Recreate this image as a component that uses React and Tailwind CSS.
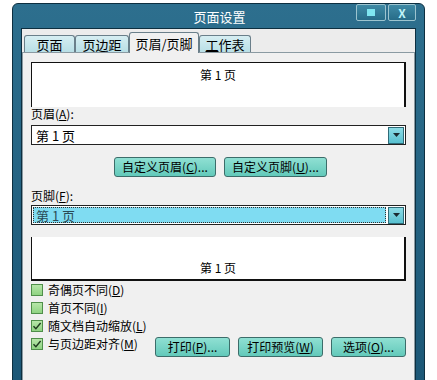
import React from "react";

const font = { fontFamily: '"Noto Sans CJK SC", "Liberation Sans", sans-serif' };

const Tab = ({ label, w, active }) => (
  <div
    className={
      active
        ? `relative z-10 -mb-px h-[21px] ${w} bg-[#f0f0f0] border border-b-0 border-[#6a7f8a] rounded-t-[3px] flex items-center justify-center text-[13px] leading-none text-black`
        : `h-[17px] ${w} bg-gradient-to-b from-[#d6eef2] to-[#b9dfe6] border border-b-0 border-[#6a7f8a] rounded-t-[3px] flex items-center justify-center text-[13px] leading-none text-black`
    }
  >
    {label}
  </div>
);

const Btn = ({ children, w }) => (
  <button
    className={`h-[20px] ${w} rounded-[3px] border border-[#3c6d6a] bg-gradient-to-b from-[#8fe0d3] to-[#62c9ba] text-[12px] text-black flex items-center justify-center leading-none`}
  >
    {children}
  </button>
);

const Arrow = () => (
  <div className="w-[16px] h-[17px] mr-px bg-gradient-to-b from-[#8cdce6] to-[#57c0d0] border border-[#2f6a77] flex items-center justify-center">
    <svg width="7" height="4" viewBox="0 0 7 4">
      <path d="M0 0h7L3.5 4z" fill="#1a2a30" />
    </svg>
  </div>
);

const Check = ({ checked, label }) => (
  <div className="flex items-center h-[18px] gap-[5px]">
    <div className="w-[12px] h-[12px] border border-[#4f8f4a] bg-gradient-to-b from-[#b6e6a8] to-[#8fd382] flex items-center justify-center">
      {checked && (
        <svg width="10" height="10" viewBox="0 0 10 10">
          <path d="M1.5 5.2l2.4 2.5L8.6 2" stroke="#1f3a1f" strokeWidth="1.4" fill="none" />
        </svg>
      )}
    </div>
    <span className="text-[12px] leading-none text-black">{label}</span>
  </div>
);

export default function App() {
  return (
    <div className="w-[437px] h-[380px] bg-white overflow-hidden pt-[3px]" style={font}>
      <div className="ml-[12px] w-[413px] h-[400px] rounded-t-[6px] bg-gradient-to-b from-[#2d6f8e] to-[#1b5675] border border-[#0d2f40] flex flex-col">
        <div className="h-[24px] flex items-center relative">
          <div className="flex-1 text-center text-white text-[13px] leading-none pl-[2px]">页面设置</div>
          <div className="absolute right-[8px] top-0 flex gap-[2px]">
            <div className="w-[30px] h-[17px] border border-[#9cc4cf] rounded-[2px] bg-gradient-to-b from-[#3f8aa5] to-[#276c88] flex items-center justify-center">
              <div className="w-[8px] h-[7px] bg-[#7fe6f0]" />
            </div>
            <div className="w-[28px] h-[17px] border border-[#9cc4cf] rounded-[2px] bg-gradient-to-b from-[#3f8aa5] to-[#276c88] flex items-center justify-center text-[#bff4f8] text-[12px] font-bold leading-none">
              X
            </div>
          </div>
        </div>
        <div className="flex-1 mx-[8px] bg-[#ececec] border border-[#0d2f40] pt-[3px]">
          <div className="flex items-end pl-[2px] h-[20px]">
            <Tab w="w-[51px]" label="页面" />
            <Tab w="w-[54px]" label="页边距" />
            <Tab w="w-[70px]" label="页眉/页脚" active />
            <Tab w="w-[52px]" label={<><span className="underline">工</span>作表</>} />
          </div>
          <div className="bg-[#f0f0f0] border border-[#8a9aa2] h-[340px] px-[8px] pt-[9px]">
            <div className="h-[45px] bg-white border-t border-l border-r-2 border-[#111] flex justify-center pt-[6px] text-[12px] leading-none">
              第 1 页
            </div>
            <div className="text-[12px] h-[13px] leading-[13px]">
              页眉(<span className="underline">A</span>):
            </div>
            <div className="mt-[5px] h-[20px] bg-white border border-[#222] flex items-center">
              <span className="flex-1 pl-[4px] text-[13px] leading-none">第 1 页</span>
              <Arrow />
            </div>
            <div className="flex justify-center gap-[8px] mt-[12px] pl-[4px]">
              <Btn w="w-[102px]">自定义页眉(<span className="underline">C</span>)...</Btn>
              <Btn w="w-[103px]">自定义页脚(<span className="underline">U</span>)...</Btn>
            </div>
            <div className="text-[12px] mt-[13px] h-[12px] leading-[12px]">
              页脚(<span className="underline">F</span>):
            </div>
            <div className="mt-[3px] h-[20px] bg-white border border-[#222] flex items-center">
              <div className="flex-1 h-[16px] ml-[1px] mr-[2px] bg-[#7fdcf2] border border-dotted border-[#333] flex items-center">
                <span className="pl-[2px] text-[13px] leading-none text-[#2a4a55]">第 1 页</span>
              </div>
              <Arrow />
            </div>
            <div className="mt-[12px] h-[44px] bg-white border-b-2 border-r-2 border-l border-[#111] flex items-end justify-center pb-[5px] text-[12px] leading-none">
              第 1 页
            </div>
            <div className="flex flex-col">
              <Check label={<>奇偶页不同(<span className="underline">D</span>)</>} />
              <Check label={<>首页不同(<span className="underline">I</span>)</>} />
              <Check checked label={<>随文档自动缩放(<span className="underline">L</span>)</>} />
              <Check checked label={<>与页边距对齐(<span className="underline">M</span>)</>} />
            </div>
            <div className="flex justify-end gap-[8px] -mt-[16px]">
              <Btn w="w-[75px]">打印(<span className="underline">P</span>)...</Btn>
              <Btn w="w-[85px]">打印预览(<span className="underline">W</span>)</Btn>
              <Btn w="w-[75px]">选项(<span className="underline">O</span>)...</Btn>
            </div>
          </div>
        </div>
      </div>
    </div>
  );
}
